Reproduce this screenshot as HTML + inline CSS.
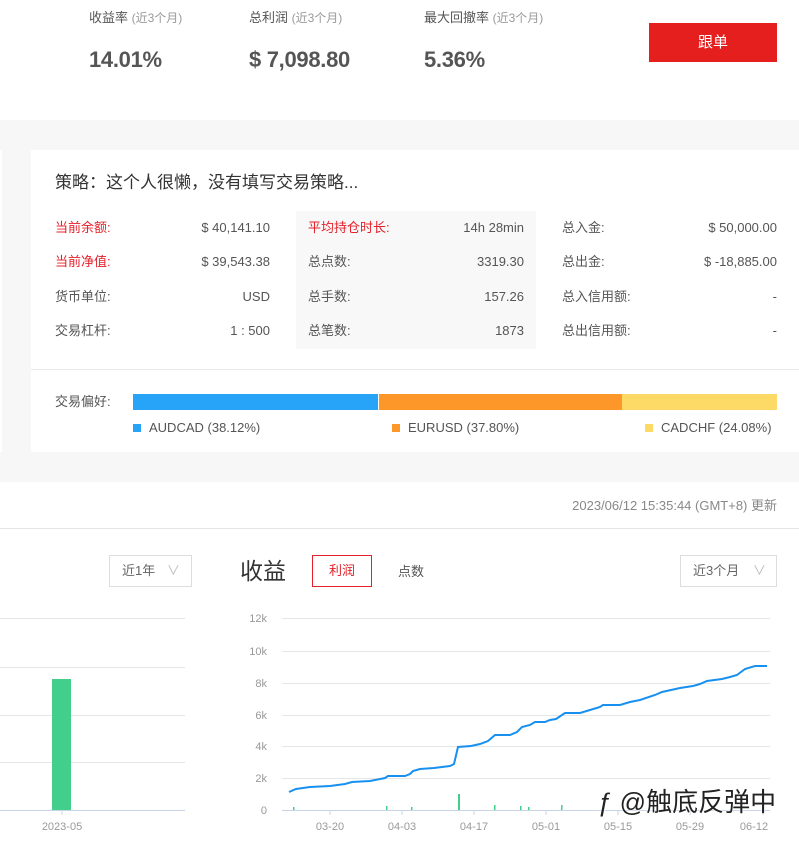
<!DOCTYPE html>
<html><head><meta charset="utf-8"><style>
*{margin:0;padding:0;box-sizing:border-box}
body{width:799px;height:851px;overflow:hidden;background:#fff;font-family:"Liberation Sans","Noto Sans CJK SC",sans-serif;color:#555;position:relative}
.a{position:absolute;white-space:nowrap}
.lbl{font-size:13px;color:#555;line-height:18px}
.lbl small{font-size:12px;color:#999}
.big{font-size:22px;font-weight:bold;color:#555;letter-spacing:-0.3px}
.r{text-align:right}
.row{font-size:13px;color:#555;line-height:16px}
.red{color:#e5202a}
</style></head><body>
<div class="a lbl" style="left:89px;top:9px">收益率 <small>(近3个月)</small></div>
<div class="a lbl" style="left:249px;top:9px">总利润 <small>(近3个月)</small></div>
<div class="a lbl" style="left:424px;top:9px">最大回撤率 <small>(近3个月)</small></div>
<div class="a big" style="left:89px;top:47px">14.01%</div>
<div class="a big" style="left:249px;top:47px">$ 7,098.80</div>
<div class="a big" style="left:424px;top:47px">5.36%</div>
<div class="a" style="left:649px;top:23px;width:128px;height:39px;background:#e51e1e;color:#fff;font-size:15px;text-align:center;line-height:39px">跟单</div>

<div class="a" style="left:0;top:120px;width:799px;height:362px;background:#f7f7f7"></div>
<div class="a" style="left:0;top:150px;width:2px;height:302px;background:#fff"></div>
<div class="a" style="left:31px;top:150px;width:768px;height:302px;background:#fff"></div>
<div class="a" style="left:55px;top:172px;font-size:17px;color:#333;line-height:22px">策略：这个人很懒，没有填写交易策略...</div>
<div class="a" style="left:296px;top:211px;width:240px;height:138px;background:#f8f8f8"></div>

<div class="a row red" style="left:55px;top:220px">当前余额:</div><div class="a row r" style="left:150px;width:120px;top:220px">$ 40,141.10</div>
<div class="a row red" style="left:55px;top:254px">当前净值:</div><div class="a row r" style="left:150px;width:120px;top:254px">$ 39,543.38</div>
<div class="a row" style="left:55px;top:289px">货币单位:</div><div class="a row r" style="left:150px;width:120px;top:289px">USD</div>
<div class="a row" style="left:55px;top:323px">交易杠杆:</div><div class="a row r" style="left:150px;width:120px;top:323px">1 : 500</div>

<div class="a row red" style="left:308px;top:220px">平均持仓时长:</div><div class="a row r" style="left:404px;width:120px;top:220px">14h 28min</div>
<div class="a row" style="left:308px;top:254px">总点数:</div><div class="a row r" style="left:404px;width:120px;top:254px">3319.30</div>
<div class="a row" style="left:308px;top:289px">总手数:</div><div class="a row r" style="left:404px;width:120px;top:289px">157.26</div>
<div class="a row" style="left:308px;top:323px">总笔数:</div><div class="a row r" style="left:404px;width:120px;top:323px">1873</div>

<div class="a row" style="left:562px;top:220px">总入金:</div><div class="a row r" style="left:657px;width:120px;top:220px">$ 50,000.00</div>
<div class="a row" style="left:562px;top:254px">总出金:</div><div class="a row r" style="left:657px;width:120px;top:254px">$ -18,885.00</div>
<div class="a row" style="left:562px;top:289px">总入信用额:</div><div class="a row r" style="left:657px;width:120px;top:289px">-</div>
<div class="a row" style="left:562px;top:323px">总出信用额:</div><div class="a row r" style="left:657px;width:120px;top:323px">-</div>

<div class="a" style="left:31px;top:369px;width:768px;height:1px;background:#eaeaea"></div>
<div class="a row" style="left:55px;top:394px">交易偏好:</div>
<div class="a" style="left:133px;top:394px;width:245px;height:16px;background:#27a4f8"></div>
<div class="a" style="left:379px;top:394px;width:243px;height:16px;background:#fd972a"></div>
<div class="a" style="left:622px;top:394px;width:155px;height:16px;background:#fdd966"></div>
<div class="a" style="left:133px;top:424px;width:8px;height:8px;background:#27a4f8"></div>
<div class="a row" style="left:149px;top:420px">AUDCAD (38.12%)</div>
<div class="a" style="left:392px;top:424px;width:8px;height:8px;background:#fd972a"></div>
<div class="a row" style="left:408px;top:420px">EURUSD (37.80%)</div>
<div class="a" style="left:645px;top:424px;width:8px;height:8px;background:#fdd966"></div>
<div class="a row" style="left:661px;top:420px">CADCHF (24.08%)</div>

<div class="a r" style="left:477px;width:300px;top:498px;font-size:13px;color:#888;line-height:16px">2023/06/12 15:35:44 (GMT+8) 更新</div>
<div class="a" style="left:0;top:528px;width:799px;height:1px;background:#e6e6e6"></div>

<div class="a" style="left:109px;top:555px;width:83px;height:32px;border:1px solid #ddd;font-size:13px;color:#666;line-height:30px;padding-left:12px">近1年 <span style="color:#bbb;margin-left:8px">∨</span></div>
<div class="a" style="left:240px;top:556px;font-size:23px;color:#333;line-height:30px">收益</div>
<div class="a" style="left:312px;top:555px;width:60px;height:32px;border:1px solid #e5202a;color:#e5202a;font-size:13px;text-align:center;line-height:30px">利润</div>
<div class="a" style="left:398px;top:564px;font-size:13px;color:#555;line-height:16px">点数</div>
<div class="a" style="left:680px;top:555px;width:97px;height:32px;border:1px solid #ddd;font-size:13px;color:#666;line-height:30px;padding-left:12px">近3个月 <span style="color:#bbb;margin-left:10px">∨</span></div>

<svg class="a" style="left:0;top:600px" width="799" height="251" viewBox="0 600 799 251">
<g stroke="#e6e6e6" stroke-width="1">
<line x1="0" y1="618.5" x2="185" y2="618.5"/><line x1="0" y1="667.5" x2="185" y2="667.5"/><line x1="0" y1="715.5" x2="185" y2="715.5"/><line x1="0" y1="762.5" x2="185" y2="762.5"/>
<line x1="282" y1="618.5" x2="770" y2="618.5"/><line x1="282" y1="651.5" x2="770" y2="651.5"/><line x1="282" y1="683.5" x2="770" y2="683.5"/><line x1="282" y1="715.5" x2="770" y2="715.5"/><line x1="282" y1="746.5" x2="770" y2="746.5"/><line x1="282" y1="778.5" x2="770" y2="778.5"/>
</g>
<line x1="0" y1="810.5" x2="185" y2="810.5" stroke="#c8d3e6"/>
<line x1="282" y1="810.5" x2="770" y2="810.5" stroke="#c8d3e6"/>
<rect x="52" y="679" width="19" height="131" fill="#42cf8c"/>
<line x1="62" y1="811" x2="62" y2="815" stroke="#c8d3e6"/>
<g stroke="#c8d3e6"><line x1="330" y1="811" x2="330" y2="815"/><line x1="402" y1="811" x2="402" y2="815"/><line x1="474" y1="811" x2="474" y2="815"/><line x1="546" y1="811" x2="546" y2="815"/><line x1="618" y1="811" x2="618" y2="815"/><line x1="690" y1="811" x2="690" y2="815"/><line x1="763" y1="811" x2="763" y2="815"/></g>
<g fill="#999" font-size="11" font-family="Liberation Sans,sans-serif">
<text x="62" y="830" text-anchor="middle">2023-05</text>
<text x="267" y="622" text-anchor="end">12k</text><text x="267" y="655" text-anchor="end">10k</text><text x="267" y="687" text-anchor="end">8k</text><text x="267" y="719" text-anchor="end">6k</text><text x="267" y="750" text-anchor="end">4k</text><text x="267" y="782" text-anchor="end">2k</text><text x="267" y="814" text-anchor="end">0</text>
<text x="330" y="830" text-anchor="middle">03-20</text><text x="402" y="830" text-anchor="middle">04-03</text><text x="474" y="830" text-anchor="middle">04-17</text><text x="546" y="830" text-anchor="middle">05-01</text><text x="618" y="830" text-anchor="middle">05-15</text><text x="690" y="830" text-anchor="middle">05-29</text><text x="754" y="830" text-anchor="middle">06-12</text>
</g>
<g fill="#42cf8c"><rect x="293" y="807" width="1.5" height="3"/><rect x="386" y="806" width="1.5" height="4"/><rect x="411" y="807" width="1.5" height="3"/><rect x="458" y="794" width="2" height="16"/><rect x="494" y="805" width="1.5" height="5"/><rect x="520" y="806" width="1.5" height="4"/><rect x="528" y="807" width="1.5" height="3"/><rect x="561" y="805" width="1.5" height="5"/><rect x="740" y="806" width="1.5" height="4"/></g>
<polyline fill="none" stroke="#1890f0" stroke-width="2" points="289,792 296,789 310,787 330,786 345,784 352,782 370,781 385,778 388,776 405,776 410,774 413,771 420,769 434,768 450,766 454,764 458,747 471,746 480,744 488,741 495,735 510,735 517,732 522,727 530,725 535,722 545,722 550,720 556,719 565,713 580,713 590,710 600,707 603,705 620,705 630,702 640,700 655,695 662,692 680,688 693,686 700,684 707,681 722,679 730,677 737,675 745,669 755,666 767,666"/>
</svg>
<div class="a" style="left:598px;top:785px;font-size:26px;line-height:34px;color:#222;text-shadow:0 0 2px #fff,0 0 2px #fff">ƒ @触底反弹中</div>
</body></html>
